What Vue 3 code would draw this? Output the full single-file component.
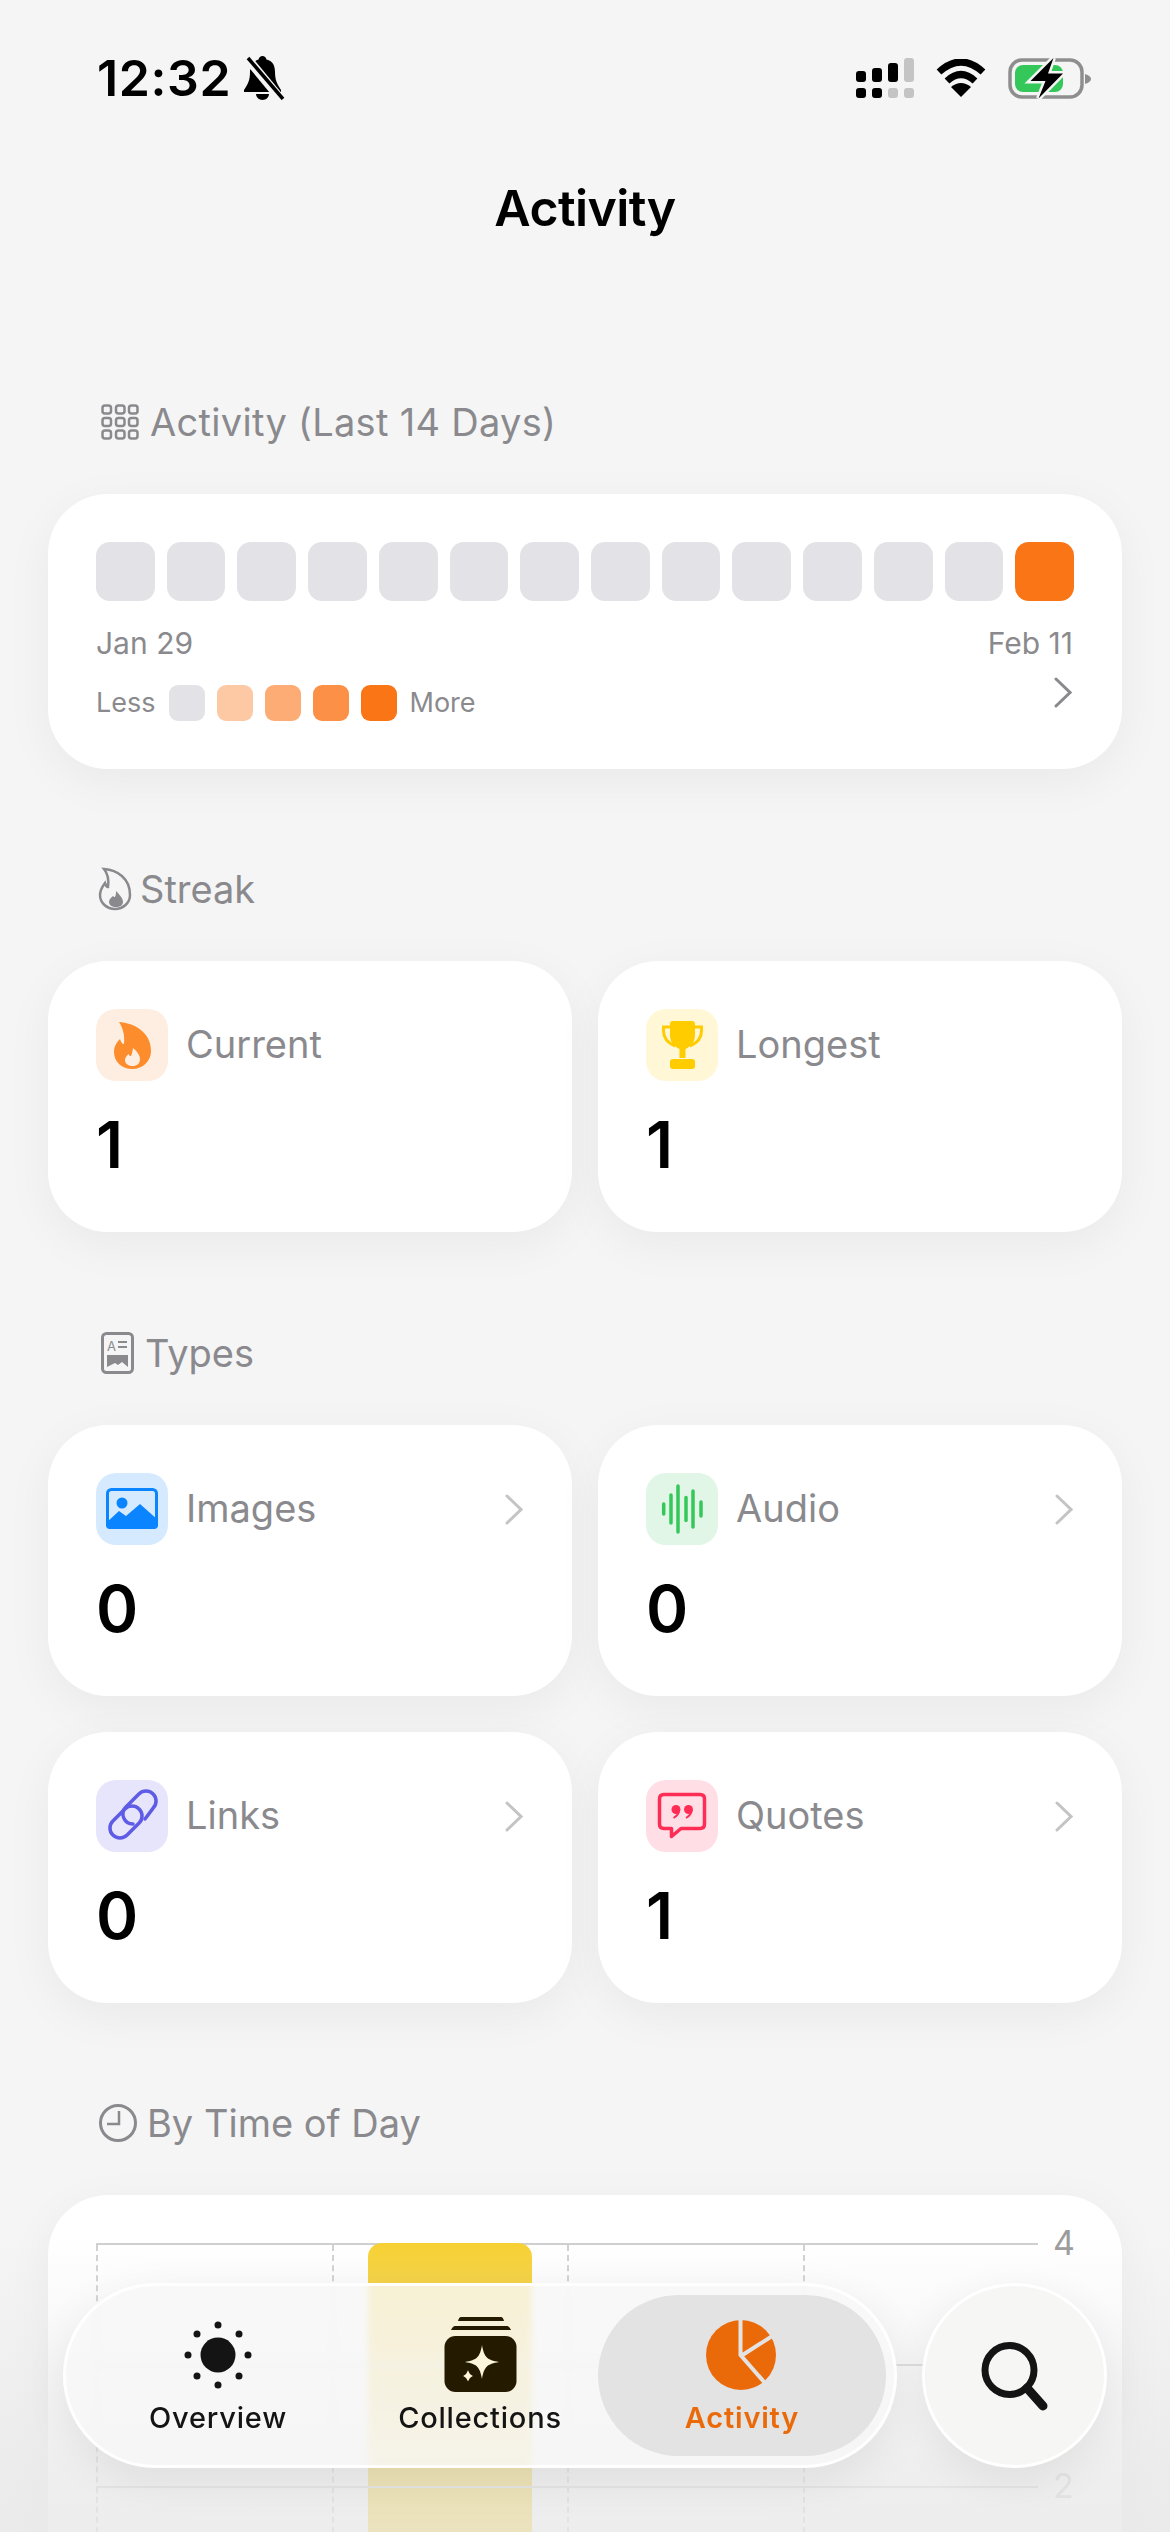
<script setup>
const days = Array.from({ length: 14 }, (_, i) => i === 13)
const legend = ['#e3e3e7', '#fdc9a5', '#fdac75', '#fc9047', '#f97516']
const signal = [
  { x: 0, y: 13, h: 11, c: '#000' },
  { x: 16, y: 10, h: 14, c: '#000' },
  { x: 32, y: 5, h: 19, c: '#000' },
  { x: 48, y: 0, h: 24, c: '#c4c4c4' }
]
const lowerSignal = ['#000', '#000', '#c4c4c4', '#c4c4c4']
const types = [
  { name: 'Images', value: 0, icon: 'images', tint: '#d6eaff' },
  { name: 'Audio', value: 0, icon: 'audio', tint: '#e1f6e6' },
  { name: 'Links', value: 0, icon: 'links', tint: '#e6e5fc' },
  { name: 'Quotes', value: 1, icon: 'quotes', tint: '#ffdfe5' }
]
const audioBars = [
  [17.7, 5], [25, 14], [32, 23], [40, 11.5], [47, 18], [55, 7]
]
const ticks = [
  { label: '4', top: 0, faint: false },
  { label: '2', top: 243, faint: true }
]
const sunDots = [
  [40, 10], [61, 19], [70, 40], [61, 61], [40, 70], [19, 61], [10, 40], [19, 19]
]
</script>

<template>
  <div class="page">
    <header class="status">
      <div class="status-left">
        <span class="time">12:32</span>
        <svg width="42" height="44" viewBox="0 0 42 44">
          <path d="M19.500 0c2 0 3.500 1.500 4 3.500C30 5 32 10 32 16c0 8 2 12 6 18v2H1v-2c4-6 6-10 6-18 0-6 3-11 8.500-12.500C16 1.500 17.500 0 19.500 0z" />
          <path d="M13 38h13c0 3-3 6-6.500 6S13 41 13 38z" />
          <path d="M3 1l34 41" stroke="#f5f5f5" stroke-width="9" />
          <path d="M5 2l35 41" stroke="#000" stroke-width="3.500" />
        </svg>
      </div>
      <div class="status-right">
        <svg width="58" height="40" viewBox="0 0 58 40">
          <rect v-for="bar in signal" :key="bar.x" :x="bar.x" :y="bar.y" width="10" :height="bar.h" rx="3" :fill="bar.c" />
          <rect v-for="(c, i) in lowerSignal" :key="i" :x="i * 16" y="30" width="10" height="10" rx="3" :fill="c" />
        </svg>
        <svg width="50" height="38" viewBox="0 0 50 38" fill="none" stroke="#000">
          <path d="M3 13Q25-7 47 13" stroke-width="7" />
          <path d="M11 22Q25 9 39 22" stroke-width="7" />
          <path d="M25 38L15 28Q25 20 35 28z" fill="#000" stroke="none" />
        </svg>
        <svg width="84" height="42" viewBox="0 0 84 42">
          <rect x="2" y="3" width="72" height="37" rx="12" fill="none" stroke="#8e8e8e" stroke-width="3.500" />
          <path d="M77 17q6 2 6 5t-6 5z" fill="#8e8e8e" />
          <rect x="7" y="8" width="48" height="27" rx="8" fill="#34c759" />
          <path d="M45.500 1L22.500 24H37.500L30.500 41.500L55 16.500H40z" fill="#000" stroke="#f5f5f5" stroke-width="5" paint-order="stroke" />
        </svg>
      </div>
    </header>

    <h1 class="title">Activity</h1>

    <section class="section first">
      <h2 class="heading">
        <svg width="44" height="36" viewBox="0 0 44 36" fill="none" stroke="#8a8a8e" stroke-width="2.500">
          <g v-for="y in [1.500, 14, 26.500]" :key="y">
            <rect v-for="x in [4.500, 18, 31]" :key="x" :x="x" :y="y" width="8.500" height="8" rx="2.500" />
          </g>
        </svg>
        <span>Activity (Last 14 Days)</span>
      </h2>
      <div class="card activity">
        <div class="cells">
          <div v-for="(on, i) in days" :key="i" class="cell" :class="{ on }"></div>
        </div>
        <div class="dates">
          <span>Jan 29</span>
          <span>Feb 11</span>
        </div>
        <div class="legend">
          <span>Less</span>
          <div class="swatches">
            <i v-for="c in legend" :key="c" :style="{ background: c }"></i>
          </div>
          <span>More</span>
          <svg class="legend-chevron" width="18" height="31" viewBox="0 0 18 31" fill="none" stroke="#8a8a8e" stroke-width="3" stroke-linecap="round">
            <path d="M2 2l14 13.500L2 29" />
          </svg>
        </div>
      </div>
    </section>

    <section class="section">
      <h2 class="heading">
        <svg width="34" height="44" viewBox="0 0 34 44" fill="none" stroke="#8a8a8e" stroke-width="2.500">
          <path d="M6 2C19 3 32 11 32 28C32 36 25 42 17 42C9 42 2 36 2 28C2 23 4 20 7 16C8 19 9 20 10 20C11 13 10 7 6 2Z" />
          <path d="M18 24C23 29 25 32 25 35C25 38 22 40 18 40C14 40 11 38 11 35C11 32 13 31 15 29C16 30 16.500 30 17 30C18 28 18 26 18 24Z" fill="#8a8a8e" stroke="none" />
        </svg>
        <span>Streak</span>
      </h2>
      <div class="grid">
        <div class="card stat">
          <div class="stat-head">
            <div class="tile" style="background: #feeee1">
              <svg width="72" height="72" viewBox="0 0 72 72">
                <g transform="translate(18 13)">
                  <path d="M5 0C20 1 37 10 37 29C37 39 29 47 18.500 47C8 47 0 40 0 30C0 24 3 20 6 17C7 20 8 22 10 22C11 14 9 6 5 0Z" fill="#fd8d2c" />
                  <path d="M19 26C25 31 26 35 26 37C26 41.500 23 44 18.500 44C14 44 11 41.500 11 38C11 35.500 13 33.500 14.500 32C15 33.500 16 34 17 34C18 32 18.500 29 19 26Z" fill="#feeee1" />
                </g>
              </svg>
            </div>
            <span class="label">Current</span>
          </div>
          <div class="value">1</div>
        </div>
        <div class="card stat">
          <div class="stat-head">
            <div class="tile" style="background: #fff7d6">
              <svg width="72" height="72" viewBox="0 0 72 72">
                <g transform="translate(15 12)">
                  <path d="M10 6H2.500V10C2.500 17 7 22 14 25M33 6H40.500V10C40.500 17 36 22 29 25" fill="none" stroke="#ffcc00" stroke-width="3" />
                  <path d="M12 0H31C33 0 34 1 34 3V14C34 22 29 26 24.500 28V37H18.500V28C14 26 9 22 9 14V3C9 1 10 0 12 0Z" fill="#ffcc00" />
                  <rect x="9" y="38" width="25" height="10" rx="3" fill="#ffcc00" />
                </g>
              </svg>
            </div>
            <span class="label">Longest</span>
          </div>
          <div class="value">1</div>
        </div>
      </div>
    </section>

    <section class="section types">
      <h2 class="heading">
        <svg width="39" height="42" viewBox="0 0 39 42" fill="none" stroke="#8a8a8e" stroke-width="3">
          <rect x="4.500" y="1.500" width="30" height="39" rx="4" />
          <text x="9" y="19" class="doc-a">A</text>
          <path d="M20 10h9M20 15h9" stroke-width="2" />
          <path d="M9 23h21v12l-6-5-4 3-3-2-8 4z" fill="#8a8a8e" stroke="none" />
        </svg>
        <span>Types</span>
      </h2>
      <div class="grid">
        <div v-for="item in types" :key="item.name" class="card stat">
          <div class="stat-head">
            <div class="tile" :style="{ background: item.tint }">
              <svg width="72" height="72" viewBox="0 0 72 72" fill="none">
                <template v-if="item.icon === 'images'">
                  <rect x="11.500" y="16.500" width="49" height="38" rx="4" stroke="#0a84ff" stroke-width="3" />
                  <path d="M10 50L23 38L30 43L44 31L62 47V52Q62 56 58 56H14Q10 56 10 52Z" fill="#0a84ff" />
                  <circle cx="26" cy="30" r="5.500" fill="#0a84ff" />
                </template>
                <template v-else-if="item.icon === 'audio'">
                  <path v-for="bar in audioBars" :key="bar[0]" :d="`M${bar[0]} ${36 - bar[1]}V${36 + bar[1]}`" stroke="#34c759" stroke-width="3.500" stroke-linecap="round" />
                </template>
                <template v-else-if="item.icon === 'links'">
                  <g stroke="#5e5ce6" stroke-width="3.500" stroke-linecap="round">
                    <path d="M49 39L57.100 28.100A10 10 0 0 0 42.900 13.900L29.900 26.900A10 10 0 0 0 37 44" />
                    <path d="M28.900 28.900A10 10 0 0 1 43.100 43.100L31.100 55.100A10 10 0 0 1 16.900 40.900z" />
                  </g>
                </template>
                <template v-else>
                  <path d="M18 14.500H54Q58.500 14.500 58.500 19V44Q58.500 48.500 54 48.500H35L25.500 56.500V48.500H18Q13.500 48.500 13.500 44V19Q13.500 14.500 18 14.500Z" stroke="#ff2d55" stroke-width="3.500" stroke-linejoin="round" />
                  <circle cx="30" cy="29.500" r="4.500" fill="#ff2d55" />
                  <circle cx="42.500" cy="29.500" r="4.500" fill="#ff2d55" />
                  <path d="M33 30C33 34 31 36 27.500 38M45.500 30C45.500 34 43.500 36 40 38" stroke="#ff2d55" stroke-width="2" />
                </template>
              </svg>
            </div>
            <span class="label">{{ item.name }}</span>
            <svg class="chevron" width="18" height="31" viewBox="0 0 18 31" fill="none" stroke="#c4c4c6" stroke-width="3" stroke-linecap="round">
              <path d="M2 2l14 13.500L2 29" />
            </svg>
          </div>
          <div class="value">{{ item.value }}</div>
        </div>
      </div>
    </section>

    <section class="section">
      <h2 class="heading">
        <svg width="41" height="40" viewBox="0 0 41 40" fill="none" stroke="#8a8a8e" stroke-width="3">
          <circle cx="20" cy="20" r="17.500" />
          <path d="M21 8V21H9" stroke-width="2.500" />
        </svg>
        <span>By Time of Day</span>
      </h2>
      <div class="card chart">
        <div class="plot">
          <div class="column"></div>
          <div class="column"><div class="bar"></div></div>
          <div class="column"></div>
          <div class="column"></div>
          <div class="gridline" style="top: 119px"></div>
          <div class="gridline" style="top: 241px"></div>
          <span v-for="tick in ticks" :key="tick.label" class="tick" :class="{ faint: tick.faint }" :style="{ top: tick.top + 'px' }">{{ tick.label }}</span>
        </div>
      </div>
    </section>

    <div class="fade"></div>

    <nav class="dock">
      <div class="tabs">
        <div class="tab">
          <svg width="80" height="80" viewBox="0 0 80 80">
            <circle cx="40" cy="40" r="17.500" fill="#141414" />
            <circle v-for="dot in sunDots" :key="dot.join()" :cx="dot[0]" :cy="dot[1]" r="3.500" fill="#141414" />
          </svg>
          <span>Overview</span>
        </div>
        <div class="tab">
          <svg width="80" height="80" viewBox="0 0 80 80">
            <path d="M21 2H61Q63 2 64 6H18Q19 2 21 2Z" fill="#231a00" />
            <path d="M15 11H67Q69 11 71 15H11Q13 11 15 11Z" fill="#231a00" />
            <rect x="4.500" y="21" width="72" height="56" rx="11" fill="#231a00" />
            <path d="M42 30C44 42 47 45 59 47C47 49 44 52 42 64C40 52 37 49 25 47C37 45 40 42 42 30Z" fill="#fdf6dd" />
            <path d="M28 52C29 58 31 60 36 61C31 62 29 64 28 70C27 64 25 62 20 61C25 60 27 58 28 52Z" fill="#fdf6dd" stroke="#231a00" stroke-width="1.500" />
          </svg>
          <span>Collections</span>
        </div>
        <div class="tab active">
          <svg width="80" height="80" viewBox="0 0 80 80">
            <circle cx="39" cy="40" r="35" fill="#ea6a0a" />
            <path d="M38.500 3V40L63 68M39 41L75 18" fill="none" stroke="#e3e3e3" stroke-width="4" />
          </svg>
          <span>Activity</span>
        </div>
      </div>
      <div class="search">
        <svg width="80" height="80" viewBox="0 0 80 80" fill="none" stroke="#141414">
          <circle cx="34.500" cy="34" r="24.500" stroke-width="7" />
          <path d="M52 52L68 70" stroke-width="9" stroke-linecap="round" />
        </svg>
      </div>
    </nav>
  </div>
</template>

<style>
html,
body {
  margin: 0;
  background: #f5f5f5;
  overflow: hidden;
}
</style>

<style scoped>
.page {
  position: relative;
  width: 1170px;
  height: 2532px;
  overflow: hidden;
  background: #f5f5f5;
  font-family: Inter, 'Liberation Sans', sans-serif;
  color: #000;
}

.status {
  display: flex;
  align-items: center;
  justify-content: space-between;
  height: 156px;
  padding: 0 78px 0 97px;
}

.status-left,
.status-right {
  display: flex;
  align-items: center;
}

.status-left {
  gap: 12px;
}

.status-right {
  gap: 22px;
}

.time {
  font-size: 50px;
  font-weight: 600;
  letter-spacing: 0.6px;
}

.title {
  margin: 0;
  font-size: 50px;
  font-weight: 600;
  letter-spacing: -0.6px;
  line-height: 104px;
  text-align: center;
}

.section {
  margin: 88px 48px 0;
}

.section.first {
  margin-top: 130px;
}

.section.types {
  margin-top: 89px;
}

.heading {
  display: flex;
  align-items: center;
  gap: 8px;
  height: 64px;
  margin: 0 0 40px;
  padding-left: 50px;
  font-size: 38px;
  font-weight: 400;
  color: #8a8a8e;
}

.first .heading {
  letter-spacing: 0.3px;
}

.card {
  background: #fff;
  border-radius: 60px;
  box-shadow: 0 12px 48px rgba(0, 0, 0, 0.05);
}

.activity {
  padding: 48px;
}

.cells {
  display: grid;
  grid-template-columns: repeat(14, 1fr);
  gap: 12px;
}

.cell {
  height: 59px;
  border-radius: 14px;
  background: #e3e3e7;
}

.cell.on {
  background: #f97516;
}

.dates {
  display: flex;
  justify-content: space-between;
  margin-top: 24px;
  padding-right: 1px;
  font-size: 30px;
  line-height: 36px;
  color: #8a8a8e;
}

.legend {
  display: flex;
  align-items: center;
  gap: 13px;
  margin-top: 24px;
  height: 36px;
  font-size: 27px;
  line-height: 34px;
  color: #8a8a8e;
}

.swatches {
  display: flex;
  gap: 12px;
}

.swatches i {
  display: block;
  width: 36px;
  height: 36px;
  border-radius: 9px;
}

.legend-chevron {
  margin: -22px 2px 0 auto;
}

.grid {
  display: grid;
  grid-template-columns: 1fr 1fr;
  gap: 36px 26px;
}

.stat {
  height: 271px;
  padding: 48px 49px 0 48px;
  box-sizing: border-box;
}

.stat-head {
  display: flex;
  align-items: center;
  gap: 18px;
}

.tile {
  flex: none;
  width: 72px;
  height: 72px;
  border-radius: 20px;
}

.tile svg {
  display: block;
}

.label {
  margin-top: -3px;
  font-size: 38px;
  color: #8a8a8e;
}

.chevron {
  margin-left: auto;
}

.value {
  margin-top: 24px;
  font-size: 64px;
  font-weight: 600;
  line-height: 80px;
}

.doc-a {
  font-family: Inter, sans-serif;
  font-size: 13px;
  fill: #8a8a8e;
  stroke: none;
}

.chart {
  height: 700px;
  padding: 48px;
  box-sizing: border-box;
}

.plot {
  position: relative;
  display: grid;
  grid-template-columns: repeat(4, 1fr);
  width: 942px;
  height: 600px;
  border-top: 2px solid #cfcfcf;
}

.column {
  border-left: 2px dashed #d0d0d0;
}

.column:last-of-type {
  border-right: 2px dashed #d0d0d0;
}

.bar {
  height: 100%;
  margin: -2px 35px 0 34px;
  border-radius: 14px 14px 0 0;
  background: #f7d02f;
}

.gridline {
  position: absolute;
  left: 0;
  right: 0;
  height: 2px;
  background: #d8d8d8;
}

.tick {
  position: absolute;
  left: 957px;
  font-size: 34px;
  line-height: 34px;
  transform: translateY(-19px);
  color: #9a9a9c;
}

.tick.faint {
  color: #d2d2d2;
}

.fade {
  position: absolute;
  left: 0;
  right: 0;
  top: 2235px;
  bottom: 0;
  background: linear-gradient(rgba(232, 232, 232, 0), rgba(232, 232, 232, 0.72) 235px, rgba(232, 232, 232, 0.78));
}

.dock {
  position: absolute;
  left: 63px;
  bottom: 64px;
  display: flex;
  gap: 25px;
}

.tabs {
  display: grid;
  grid-template-columns: repeat(3, 262px);
  width: 834px;
  height: 185px;
  padding: 9px 0 9px 21px;
  box-sizing: border-box;
  border: 3px solid rgba(255, 255, 255, 0.95);
  border-radius: 93px;
  background: rgba(248, 248, 247, 0.8);
  backdrop-filter: blur(3px);
  box-shadow: 0 12px 44px rgba(0, 0, 0, 0.07);
}

.tab {
  display: flex;
  flex-direction: column;
  align-items: center;
  padding-top: 20px;
  font-size: 29px;
  font-weight: 500;
  letter-spacing: 0.8px;
  color: #141414;
}

.tab span {
  margin-top: 5px;
  line-height: 36px;
}

.tab.active {
  margin: 0 -13px;
  border-radius: 81px;
  background: #e3e3e3;
  font-weight: 600;
  color: #ea6a0a;
}

.search {
  display: flex;
  align-items: center;
  justify-content: center;
  width: 185px;
  height: 185px;
  box-sizing: border-box;
  border: 3px solid rgba(255, 255, 255, 0.95);
  border-radius: 50%;
  background: #f6f6f5;
  box-shadow: 0 12px 44px rgba(0, 0, 0, 0.07);
}
</style>
